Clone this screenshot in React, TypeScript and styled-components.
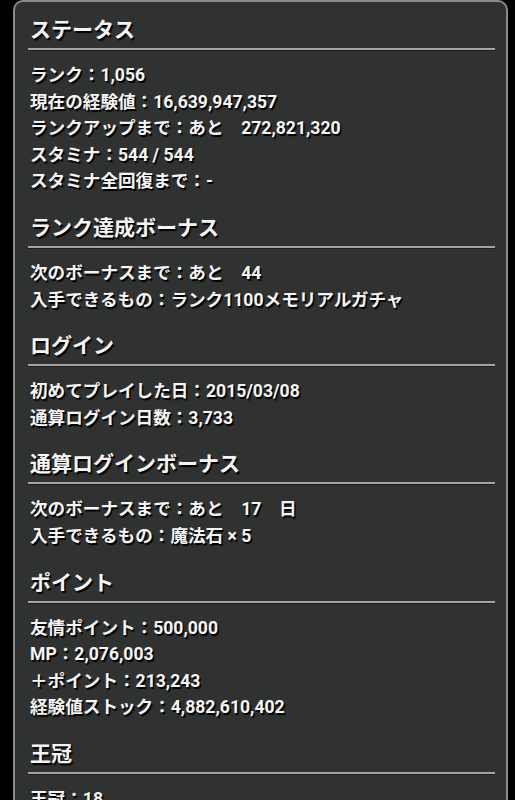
import React from 'react';
import styled, { createGlobalStyle } from 'styled-components';

const GlobalStyle = createGlobalStyle`
  html, body {
    margin: 0;
    padding: 0;
    background: #000;
  }
  body {
    font-family: Roboto, "Noto Sans CJK JP", sans-serif;
    overflow: hidden;
  }
`;

const Page = styled.div`
  padding: 0 7px 0 13px;
  height: 800px;
  overflow: hidden;
`;

const Panel = styled.div`
  min-height: 900px;
  background: #303131;
  border: 2px solid #8a8a8a;
  border-bottom: none;
  border-radius: 10px 10px 0 0;
  padding: 13px 11px 0 13px;
  color: #f4f4f4;
  text-shadow: 1.5px 1.5px 1px #000;
`;

const Section = styled.section`
  margin-bottom: 18px;
`;

const Heading = styled.h2`
  margin: 0 0 3px;
  padding-left: 2px;
  font-size: 21px;
  line-height: 30px;
  font-weight: 700;
`;

const Divider = styled.div`
  height: 2px;
  background: #a3a3a3;
  box-shadow: 0 1px 0 #1e1e1e;
  margin-bottom: 12px;
`;

const Line = styled.div`
  padding-left: 2px;
  font-size: 17.6px;
  line-height: 26.6px;
  font-weight: 700;
  white-space: nowrap;
`;

const sections: { title: string; lines: string[] }[] = [
  {
    title: 'ステータス',
    lines: [
      'ランク：1,056',
      '現在の経験値：16,639,947,357',
      'ランクアップまで：あと\u3000272,821,320',
      'スタミナ：544 / 544',
      'スタミナ全回復まで：-',
    ],
  },
  {
    title: 'ランク達成ボーナス',
    lines: ['次のボーナスまで：あと\u300044', '入手できるもの：ランク1100メモリアルガチャ'],
  },
  {
    title: 'ログイン',
    lines: ['初めてプレイした日：2015/03/08', '通算ログイン日数：3,733'],
  },
  {
    title: '通算ログインボーナス',
    lines: ['次のボーナスまで：あと\u300017\u3000日', '入手できるもの：魔法石 × 5'],
  },
  {
    title: 'ポイント',
    lines: [
      '友情ポイント：500,000',
      'MP：2,076,003',
      '＋ポイント：213,243',
      '経験値ストック：4,882,610,402',
    ],
  },
  {
    title: '王冠',
    lines: ['王冠：18'],
  },
];

const App: React.FC = () => {
  return (
    <>
      <GlobalStyle />
      <Page>
        <Panel>
          {sections.map((s) => (
            <Section key={s.title}>
              <Heading>{s.title}</Heading>
              <Divider />
              {s.lines.map((l) => (
                <Line key={l}>{l}</Line>
              ))}
            </Section>
          ))}
        </Panel>
      </Page>
    </>
  );
};

export default App;
